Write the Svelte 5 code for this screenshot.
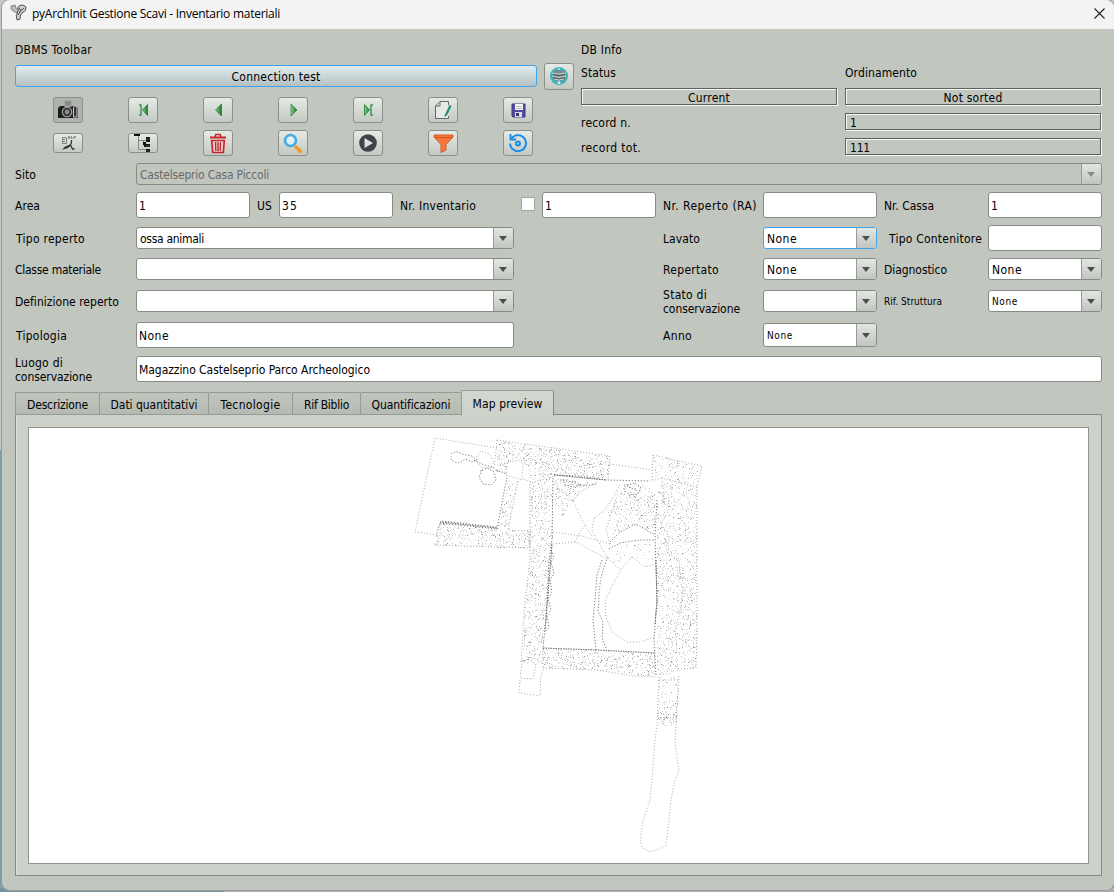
<script>
  // Adjusts tracking so that a caption occupies its designed width.
  function fit(node, width) {
    const natural = node.getBoundingClientRect().width;
    const count = node.textContent.length;
    if (width && count > 1) {
      node.style.letterSpacing = (width - natural) / count + 'px';
    }
  }

  const tabs = [
    { name: 'Descrizione', size: 84, w: 61 },
    { name: 'Dati quantitativi', size: 109, w: 87 },
    { name: 'Tecnologie', size: 84, w: 60 },
    { name: 'Rif Biblio', size: 68, w: 45 },
    { name: 'Quantificazioni', size: 101, w: 79 },
    { name: 'Map preview', size: 93, w: 70, active: true }
  ];

  const rowOne = ['camera', 'first', 'prev', 'next', 'last', 'edit', 'save'];
  const rowTwo = ['pdf', 'tree', 'trash', 'search', 'play', 'filter', 'reload'];

  // Excavation plan: stippled masonry areas and dotted outlines.
  let seed = 20231;
  function rnd() {
    seed = (seed + 0x6d2b79f5) | 0;
    let t = Math.imul(seed ^ (seed >>> 15), 1 | seed);
    t = (t + Math.imul(t ^ (t >>> 7), 61 | t)) ^ t;
    return ((t ^ (t >>> 14)) >>> 0) / 4294967296;
  }
  function inside(x, y, p) {
    let hit = false;
    for (let i = 0, j = p.length - 1; i < p.length; j = i++) {
      const [xi, yi] = p[i];
      const [xj, yj] = p[j];
      if (yi > y !== yj > y && x < ((xj - xi) * (y - yi)) / (yj - yi) + xi) hit = !hit;
    }
    return hit;
  }
  const areas = [
    { d: 0.2, p: [[498, 440], [533, 445], [609, 456], [608, 480], [554, 475], [552, 481], [531, 480], [523, 460], [507, 463], [505, 475], [495, 470]] },
    { d: 0.18, p: [[530, 480], [553, 478], [552, 540], [550, 570], [543, 648], [543, 665], [521, 663], [525, 600], [530, 560]] },
    { d: 0.18, p: [[507, 479], [518, 482], [508, 530], [497, 528]] },
    { d: 0.19, p: [[440, 523], [497, 529], [530, 530], [529, 548], [434, 545], [440, 537]] },
    { d: 0.19, p: [[543, 648], [597, 650], [655, 653], [656, 676], [633, 675], [597, 670], [543, 668]] },
    { d: 0.16, p: [[661, 479], [697, 487], [697, 560], [697, 640], [696, 668], [679, 671], [657, 674], [656, 553], [657, 500]] },
    { d: 0.13, p: [[653, 455], [702, 466], [697, 487], [662, 478], [652, 480]] },
    { d: 0.14, p: [[622, 484], [642, 483], [656, 492], [654, 533], [632, 524], [612, 535], [606, 512], [618, 496]] },
    { d: 0.12, p: [[628, 496], [656, 492], [654, 515], [634, 519]] },
    { d: 0.16, p: [[555, 477], [588, 482], [572, 502], [563, 517], [555, 505]] },
    { d: 0.08, p: [[614, 545], [652, 541], [654, 560], [632, 558], [612, 563]] },
    { d: 0.1, p: [[659, 676], [679, 674], [678, 712], [658, 712]] },
    { d: 0.3, p: [[658, 711], [678, 711], [676, 724], [658, 726]] }
  ];
  const tones = ['', '', ''];
  for (const a of areas) {
    const xs = a.p.map((q) => q[0]);
    const ys = a.p.map((q) => q[1]);
    for (let y = Math.min(...ys); y < Math.max(...ys); y++) {
      for (let x = Math.min(...xs); x < Math.max(...xs); x++) {
        if (rnd() < a.d && inside(x, y, a.p)) {
          const r = rnd();
          tones[r < 0.55 ? 0 : r < 0.92 ? 1 : 2] += `M${x} ${y}h1v1h-1z`;
        }
      }
    }
  }
  const light = [
    'M497 448L435 438L415 532L437 535',
    'M497 440L533 445L610 456L608 480', 'M497 440L494 470',
    'M610 464L652 470', 'M653 455L702 466L697 487L661 478L652 481M653 455L652 480',
    'M476 457l5-6 8 3 5 8-3 6-9-1-7-7',
    'M507 463L520 460L523 463L522 479L530 481L530 560L525 600L521 663',
    'M507 463L506 475L522 480M518 481L508 530L530 531L529 548L434 545L440 537L440 523',
    'M532 497l13-1 1 13-14-1 0-9M540 468l5-6 5 4',
    'M522 661L520 678L533 679L536 665L531 660M520 680L519 693L540 696L541 675L544 669',
    'M543 668L597 670L633 676L656 677M543 648L543 668',
    'M697 487L697 640L696 668L679 669',
    'M573 501L578 494L585 489L599 481M573 501L582 520L592 536M573 501L554 484',
    'M553 532L582 536L610 544M553 544L576 542L607 559M575 542L580 532L586 524',
    'M594 518L605 510L614 496L620 484M594 518L592 530L600 545L607 557L621 571',
    'M610 544L606 530L610 518L618 492',
    'M632 557L622 568L611 588L605 602L606 617L612 632L627 642L640 642L655 637M632 557L640 563L645 567L656 564',
    'M660 493q8-3 9 4l-1 15-8 12M661 524l8 13-1 17 11 5 1 14M677 567l2 14 4 6-2 22-6 20 2 20',
    'M659 674L657 725L655 740L652 780L650 800L643 821L640 842L643 848L650 852L659 849L666 845L669 820L671 800L675 780L679 771L675 743L676 725L679 674',
    'M659 680h19M660 674h12M658 718h19'
  ];
  const mid = [
    'M451 454q5-4 11 0l10 2 5 4-5 2-7-3-6 4q-9-1-8-7M474 460l8 4 12 4',
    'M482 470l-3 7 4 7 8 1 5-5-2-8-7-4-7 3',
    'M440 523L497 529M442 521L497 527M497 529L507 477M496 470L507 474M440 524l-3 7v6',
    'M553 478L552 540L549 560L546 620L543 648M551 550l3 8-3 4 3 12-4 6 2 12-4 7 3 11-4 6 2 11-4 5',
    'M554 475L579 476L606 480L650 481M560 480l14 2 8 4 14-2',
    'M610 542L620 532L636 524L655 535',
    'M609 549L620 543L640 540L654 540',
    'M657 500L655 536L656 570L657 600L654 640L656 676',
    'M608 557Q598 580 599 603L598 611L603 622L602 638L606 648',
    'M602 560L597 575L595 600L593 620L596 650',
    'M658 492q7 2 6 11M627 485l8-2 6 5-3 6-9 1-5-5 3-6M629 487l8 4M563 479l2 6 9 2 7-3'
  ];
  const dark = [
    'M543 648L597 650L655 653', 'M554 475L606 480', 'M552 545L550 570L545 630',
    'M656 560L657 600L655 625', 'M440 522L497 528'
  ];
</script>

{#snippet label(text, w, cls = '')}
  <span class="cap {cls}" use:fit={w}>{text}</span>
{/snippet}

{#snippet combo(text, w, cls = '', col = '')}
  <div class="combo {cls} {col}">
    <div class="value">{@render label(text, w)}</div>
    <div class="drop"><svg width="8" height="5" viewBox="0 0 8 5"><path d="M0 0h8L4 5z" fill="currentColor" /></svg></div>
  </div>
{/snippet}

{#snippet icon(name)}
  {#if name === 'camera'}
    <svg width="22" height="20" viewBox="0 0 22 20">
      <path d="M8 1h6v5H8z" fill="#888" stroke="#999" /><path d="M1 8l2-2h4l1 1h6l1-1h4l2 2v10H1z" fill="#222" />
      <path d="M1 8h5v9H1z" fill="#1c1c1c" /><circle cx="10" cy="12" r="5.300" fill="#aaa" /><circle cx="10" cy="12" r="4.200" fill="#333" /><circle cx="10" cy="12" r="2.400" fill="#888" />
      <path d="M16.500 17V8q0-2 1.700-2 1.800 0 1.800 2V17z" fill="#333" stroke="#c5c8c5" />
    </svg>
  {:else if name === 'pdf'}
    <svg width="17" height="16" viewBox="0 0 17 16" fill="none" stroke="#777">
      <path d="M2.500 2.500h4v6h-4zM3 4.500h2M3 6.500h2" stroke-width=".9" /><path d="M8.500 4V1.500H10v1.500H8.500M11.500 1.500V4q2-1 0-2.500zM14 4V1.500h2M14 2.700h1.500" stroke-width=".8" />
      <path d="M11.500 5q.5 3-1.500 5.500T4 13.500l1.500-1.500 4-1.500 2 .5M10.500 10l2 4h2" stroke="#333" stroke-width="1.300" />
    </svg>
  {:else if name === 'tree'}
    <svg width="18" height="20" viewBox="0 0 18 20">
      <path d="M4.500 3v13.500H13M4.500 7.500H13M9.500 7.500v4.500H13" fill="none" stroke="#888" />
      <path d="M0 0h6v3H0zM12 4h4v5h-4zM10 11h6v3h-6zM12 16h4v4h-4zM9 9h3v3H9z" fill="#111" />
      <path d="M12 6h4M11 13h5M12 18h4" stroke="#666" stroke-width=".6" />
    </svg>
  {:else if name === 'trash'}
    <svg width="18" height="21" viewBox="0 0 18 21" fill="none" stroke="#c8262f">
      <path d="M1 4.500h16" stroke-width="2" /><path d="M6 4l.7-2.500h4.600L12 4" stroke-width="1.400" /><path d="M2.700 7.500l1 12h10.600l1-12z" fill="#e8d3d1" stroke-width="1.700" /><path d="M6.500 9l.3 9M9 9v9M11.500 9l-.3 9" stroke-width="1.400" />
    </svg>
  {:else if name === 'search'}
    <svg width="20" height="21" viewBox="0 0 20 21" fill="none">
      <circle cx="7.500" cy="7.500" r="5.500" stroke="#45abe3" stroke-width="2.600" fill="#dff0f5" /><path d="M13 14l4.500 4.500" stroke="#f59a1c" stroke-width="3.300" stroke-linecap="round" />
    </svg>
  {:else if name === 'play'}
    <svg width="18" height="18" viewBox="0 0 18 18"><circle cx="9" cy="9" r="8.800" fill="#41434c" /><path d="M5.500 4l8.500 5-8.500 5z" fill="#dfe3df" /></svg>
  {:else if name === 'filter'}
    <svg width="21" height="19" viewBox="0 0 21 19"><path d="M1 1h19v2l-7 7.500V16l-5 2.500v-8L1 3z" fill="#f9753c" stroke="#d65a22" /><path d="M1.500 3.500h18" stroke="#cf5722" /></svg>
  {:else if name === 'reload'}
    <svg width="20" height="20" viewBox="0 0 20 20" fill="none" stroke="#168cf0" stroke-width="1.900"><path d="M3.500 5.500A8 8 0 1 1 2 10.500" /><path d="M2.500 1v5.500H8" /><circle cx="10" cy="10.500" r="2" /></svg>
  {:else if name === 'edit'}
    <svg width="18" height="20" viewBox="0 0 18 20" fill="none">
      <path d="M14.500 5V1.500H6L1.500 6v12.500h13V16" fill="#e6eae6" stroke="#666" /><path d="M1.500 6H6V1.500" stroke="#666" /><path d="M16.500 5.500L12 15" stroke="#25907c" stroke-width="2.300" /><path d="M11 14.500l-.5 2.500 2-1.500" fill="#24534b" />
    </svg>
  {:else if name === 'save'}
    <svg width="15" height="15" viewBox="0 0 15 15"><path d="M1 1h13v13H2l-1-1z" fill="#504e9c" stroke="#3b397c" /><path d="M4 1h8v6H4z" fill="#f4f4fa" /><path d="M5 3.500h6M5 5.500h6" stroke="#bbb" /><path d="M4 9h7v5H4z" fill="#ddd" /><path d="M5 10h3v3H5z" fill="#343270" /></svg>
  {:else if name === 'globe'}
    <svg width="18" height="18" viewBox="0 0 18 18"><circle cx="9" cy="9" r="9" fill="#43b0bd" /><path d="M3 4.500q6-2.500 12 0v8q-6 3-12 0z" fill="#78898b" /><path d="M2 6q7 2 14 0M2 9q7 3 14 0M4 12q5 2 10 0" stroke="#c9d1d0" fill="none" /><path d="M3 7.500q6 2 12 0M3 10.700q6 2 12 0" stroke="#4d6062" fill="none" /><path d="M9 1v2M9 14v3M7.500 16h3" stroke="#fff" /></svg>
  {:else}
    <svg width="11" height="14" viewBox="0 0 11 14">
      <defs><linearGradient id="leaf-{name}" x1="0" x2="1"><stop offset="0" stop-color="#8bd28d" /><stop offset="1" stop-color="#15752b" /></linearGradient></defs>
      {#if name === 'first'}<path d="M9.500 1.500v11L4.500 7z" fill="url(#leaf-first)" stroke="#21803a" stroke-width=".8" /><path d="M1 2h2v10H1" fill="none" stroke="#38934b" stroke-width="1.400" />
      {:else if name === 'prev'}<path d="M8.500 1v12L2.500 7z" fill="url(#leaf-prev)" stroke="#21803a" stroke-width=".7" />
      {:else if name === 'next'}<path d="M3 1v12l6-6z" fill="url(#leaf-next)" stroke="#21803a" stroke-width=".7" />
      {:else}<path d="M1.500 1.500v11l5-5.500z" fill="url(#leaf-last)" stroke="#21803a" stroke-width=".8" /><path d="M10 2H8v10h2" fill="none" stroke="#38934b" stroke-width="1.400" />{/if}
    </svg>
  {/if}
{/snippet}

<div class="desktop">
  <div class="window">
    <header>
      <svg class="logo" width="17" height="17" viewBox="0 0 17 17">
        <path d="M1 2l4-1 1 3 3 2-2 3-4-2-2-2z" fill="#bbb" stroke="#888" /><path d="M8 3q4-4 8 0 1 4-4 6-2 1-2 6l-3 1q-2-4 1-9z" fill="#ccc" stroke="#555" /><path d="M9 4q2 4 5 0M8 11l3-5" stroke="#444" fill="none" />
      </svg>
      {@render label('pyArchInit Gestione Scavi - Inventario materiali', 248, 'title')}
      <svg class="close" width="11" height="11" viewBox="0 0 11 11"><path d="M.5.5l10 10M10.500.5l-10 10" stroke="#222" stroke-width="1.100" /></svg>
    </header>

    <div class="top">
      <section class="dbms">
        <div class="head">{@render label('DBMS Toolbar', 77)}</div>
        <div class="connect">
          <div class="test">{@render label('Connection test', 89)}</div>
          <div class="btn globe">{@render icon('globe')}</div>
        </div>
        <div class="tools">
          {#each rowOne as n}<div class="btn" class:pressed={n === 'camera'}>{@render icon(n)}</div>{/each}
          {#each rowTwo as n}<div class="btn" class:short={n === 'pdf' || n === 'tree'}>{@render icon(n)}</div>{/each}
        </div>
      </section>
      <section class="info">
        <div class="head">{@render label('DB Info', 41)}</div>
        <div class="grid">
          <div>{@render label('Status', 35)}</div><div>{@render label('Ordinamento', 72)}</div>
          <div class="well mid">{@render label('Current', 42)}</div><div class="well mid">{@render label('Not sorted', 59)}</div>
          <div class="low">{@render label('record n.', 50)}</div><div class="well">{@render label('1', 0)}</div>
          <div class="low">{@render label('record tot.', 60)}</div><div class="well">{@render label('111', 20)}</div>
        </div>
      </section>
    </div>

    <div class="form">
      {@render label('Sito', 21)}
      {@render combo('Castelseprio Casa Piccoli', 129, 'off', 'full')}

      {@render label('Area', 25)}
      <div class="input">{@render label('1', 0)}</div>
      {@render label('US', 15, 'pad')}
      <div class="input">{@render label('35', 16)}</div>
      <div class="check">{@render label('Nr. Inventario', 76)}<i></i></div>
      <div class="input">{@render label('1', 0)}</div>
      {@render label('Nr. Reperto (RA)', 94, 'pad')}
      <div class="input"></div>
      {@render label('Nr. Cassa', 50, 'pad')}
      <div class="input">{@render label('1', 0)}</div>

      {@render label('Tipo reperto', 69, 'nudge')}
      {@render combo('ossa animali', 64, '', 'wide')}
      {@render label('Lavato', 37, 'pad c8')}
      {@render combo('None', 30, 'focus')}
      {@render label('Tipo Contenitore', 93, 'deep')}
      <div class="input"></div>

      {@render label('Classe materiale', 86)}
      {@render combo('', 0, '', 'wide')}
      {@render label('Repertato', 56, 'pad c8')}
      {@render combo('None', 30)}
      {@render label('Diagnostico', 63, 'pad')}
      {@render combo('None', 30)}

      {@render label('Definizione reperto', 104)}
      {@render combo('', 0, '', 'wide')}
      <div class="two pad c8">{@render label('Stato di', 44)}{@render label('conservazione', 77)}</div>
      {@render combo('', 0)}
      {@render label('Rif. Struttura', 58, 'pad small')}
      {@render combo('None', 26, 'tiny')}

      {@render label('Tipologia', 51, 'nudge')}
      <div class="input wide">{@render label('None', 30)}</div>
      {@render label('Anno', 29, 'pad c8')}
      {@render combo('None', 26, 'tiny tall')}

      <div class="two start">{@render label('Luogo di', 48)}{@render label('conservazione', 77)}</div>
      <div class="input full">{@render label('Magazzino Castelseprio Parco Archeologico', 231)}</div>
    </div>

    <nav>
      {#each tabs as t}
        <div class="tab" class:active={t.active} style="width:{t.size}px">{@render label(t.name, t.w)}</div>
      {/each}
    </nav>
    <div class="panel">
      <div class="map">
        <svg width="1059" height="435" viewBox="29 428 1059 435">
          <g shape-rendering="crispEdges">
            <path d={tones[0]} fill="#e2e2e2" />
            <path d={tones[1]} fill="#c4c4c4" />
            <path d={tones[2]} fill="#999" />
          </g>
          <g fill="none" stroke-width="1">
            {#each light as d}<path {d} stroke="#aaa" stroke-dasharray="1 2" />{/each}
            {#each mid as d}<path {d} stroke="#808080" stroke-dasharray="1.300 1.700" />{/each}
            {#each dark as d}<path {d} stroke="#666" stroke-dasharray="1.500 1" />{/each}
          </g>
        </svg>
      </div>
    </div>
  </div>
</div>

<style>
  :global(body) { margin: 0; overflow: hidden; }
  .desktop {
    width: 1114px; height: 892px; box-sizing: border-box; padding-left: 2px;
    background: linear-gradient(#ccc4c4 0 450px, #7e9dab 450px 888px, transparent 888px), linear-gradient(90deg, #7295a2 0 224px, #b5afb0 224px);
    font: 12px/14px 'DejaVu Sans Condensed', 'DejaVu Sans', sans-serif; font-stretch: condensed; color: #000;
  }
  .window {
    width: 1112px; height: 890px; box-sizing: border-box; background: #c1c6bf;
    border-radius: 8px; overflow: hidden; box-shadow: 0 0 0 1px #969b97;
  }
  .cap { white-space: pre; width: max-content; }
  header { height: 29px; display: flex; align-items: center; background: #f3f3f3; padding: 0 9px 0 8px; }
  .logo { margin: 0 5px 4px 0; }
  .title { font-family: 'Open Sans', sans-serif; font-stretch: normal; margin-bottom: 2px; }
  .close { margin-left: auto; margin-bottom: 3px; }

  .top { display: flex; height: 130px; padding: 0 12px 0 13px; }
  .head { height: 36px; display: flex; align-items: center; padding-top: 6px; box-sizing: border-box; }
  .dbms { width: 566px; }
  .connect { display: flex; gap: 7px; align-items: center; height: 22px; }
  .test {
    width: 522px; height: 22px; box-sizing: border-box; border: 1px solid #41a3ee; border-radius: 3px; padding-top: 2px;
    display: flex; justify-content: center; align-items: center; background: linear-gradient(#e0eaea, #ccd7d9 50%, #b5c0c3);
  }
  .btn {
    width: 30px; height: 26px; box-sizing: border-box; border: 1px solid #8b908a; border-radius: 3px; overflow: hidden;
    display: flex; align-items: center; justify-content: center; background: linear-gradient(#e5eae4, #c4cac3);
  }
  .globe { height: 27px; flex: none; }
  .short { height: 20px; }
  .pressed { background: #aeb3ad; }
  .tools {
    display: grid; grid-template-columns: repeat(7, 30px); column-gap: 45px; row-gap: 7px;
    grid-auto-rows: 26px; align-items: center; padding: 10px 0 0 38px;
  }
  .grid { display: grid; grid-template-columns: 256px 256px; column-gap: 8px; grid-template-rows: 23px 18px 18px 18px; row-gap: 7px; }
  .info .grid > div { display: flex; align-items: center; }
  .info .grid > div:nth-child(-n + 2) { padding-top: 7px; }
  .info .head { height: 29px; padding-top: 13px; }
  .info .low { padding-top: 1px; }
  .info .well { box-sizing: border-box; border: 1px solid #5e625e; box-shadow: inset 1px 1px #f7f9f6, 1px 1px #f7f9f6; padding: 2px 4px 0; height: 17px; }
  .info .mid { justify-content: center; }

  .form {
    display: grid; padding: 0 12px 0 13px; align-items: center;
    grid-template-columns: 121px 114px 29px 114px 121px 28px 114px 107px 114px 111px 114px;
    grid-template-rows: 30px 32px 34px 28px 36px 32px 36px;
  }
  .form > .cap { margin-top: 2px; }
  .form > .two { margin-top: 2px; }
  .pad { margin-left: 7px; }
  .deep { margin-left: 12px; }
  .nudge { margin-left: 1px; }
  .c8 { grid-column: 8; }
  .start { grid-column: 1; }
  .wide { grid-column: 2 / 6; }
  .full { grid-column: 2 / -1; }
  .small { font-size: 10px; }
  .two { display: flex; flex-direction: column; }
  .check { grid-column: 5 / 7; display: flex; align-items: center; padding: 2px 7px 0; justify-content: space-between; }
  .check i { width: 12px; height: 12px; border: 1px solid #a3a7a2; background: #fff; margin-bottom: 4px; }
  .input {
    height: 26px; box-sizing: border-box; border: 1px solid #858a84; border-radius: 3px;
    background: #fff; display: flex; align-items: center; padding: 1px 2px 0;
  }
  .combo { height: 22px; box-sizing: border-box; border: 1px solid #858a84; border-radius: 3px; background: #fff; display: flex; overflow: hidden; }
  .value { flex: 1; display: flex; align-items: center; padding: 1px 3px 0; }
  .drop {
    width: 20px; box-sizing: border-box; border-left: 1px solid #969b95; display: flex; align-items: center; justify-content: center;
    background: linear-gradient(#e2e7e1, #c0c6bf); color: #4c504c; padding-right: 2px;
  }
  .tiny { font-size: 10px; }
  .tall { height: 24px; }
  .focus { border-color: #41a3ee; }
  .off { background: #c1c6bf; color: #686c67; }
  .off .drop { color: #888d87; }

  nav { display: flex; align-items: flex-end; padding: 0 13px; height: 28px; box-sizing: border-box; }
  .tab {
    height: 23px; box-sizing: border-box; border: 1px solid #969b95; border-right: 0; border-radius: 2px 2px 0 0;
    display: flex; align-items: center; justify-content: center; background: linear-gradient(#c0c5be, #b5bab3); padding-top: 3px;
  }
  .active {
    height: 26px; border-right: 1px solid #858a84; border-bottom-color: #ced3cc; background: linear-gradient(#d3d8d1, #ccd2ca);
    position: relative; top: 1px; padding-top: 2px;
  }
  .panel {
    margin: -1px 12px 0 13px; height: 462px; box-sizing: border-box; border: 1px solid #858a84;
    background: #ccd1ca; padding: 12px; box-shadow: inset 1px 0 #d9ded7;
  }
  .map { width: 1061px; height: 437px; box-sizing: border-box; border: 1px solid #8f948e; background: #fff; }
  .map svg { display: block; }
</style>
